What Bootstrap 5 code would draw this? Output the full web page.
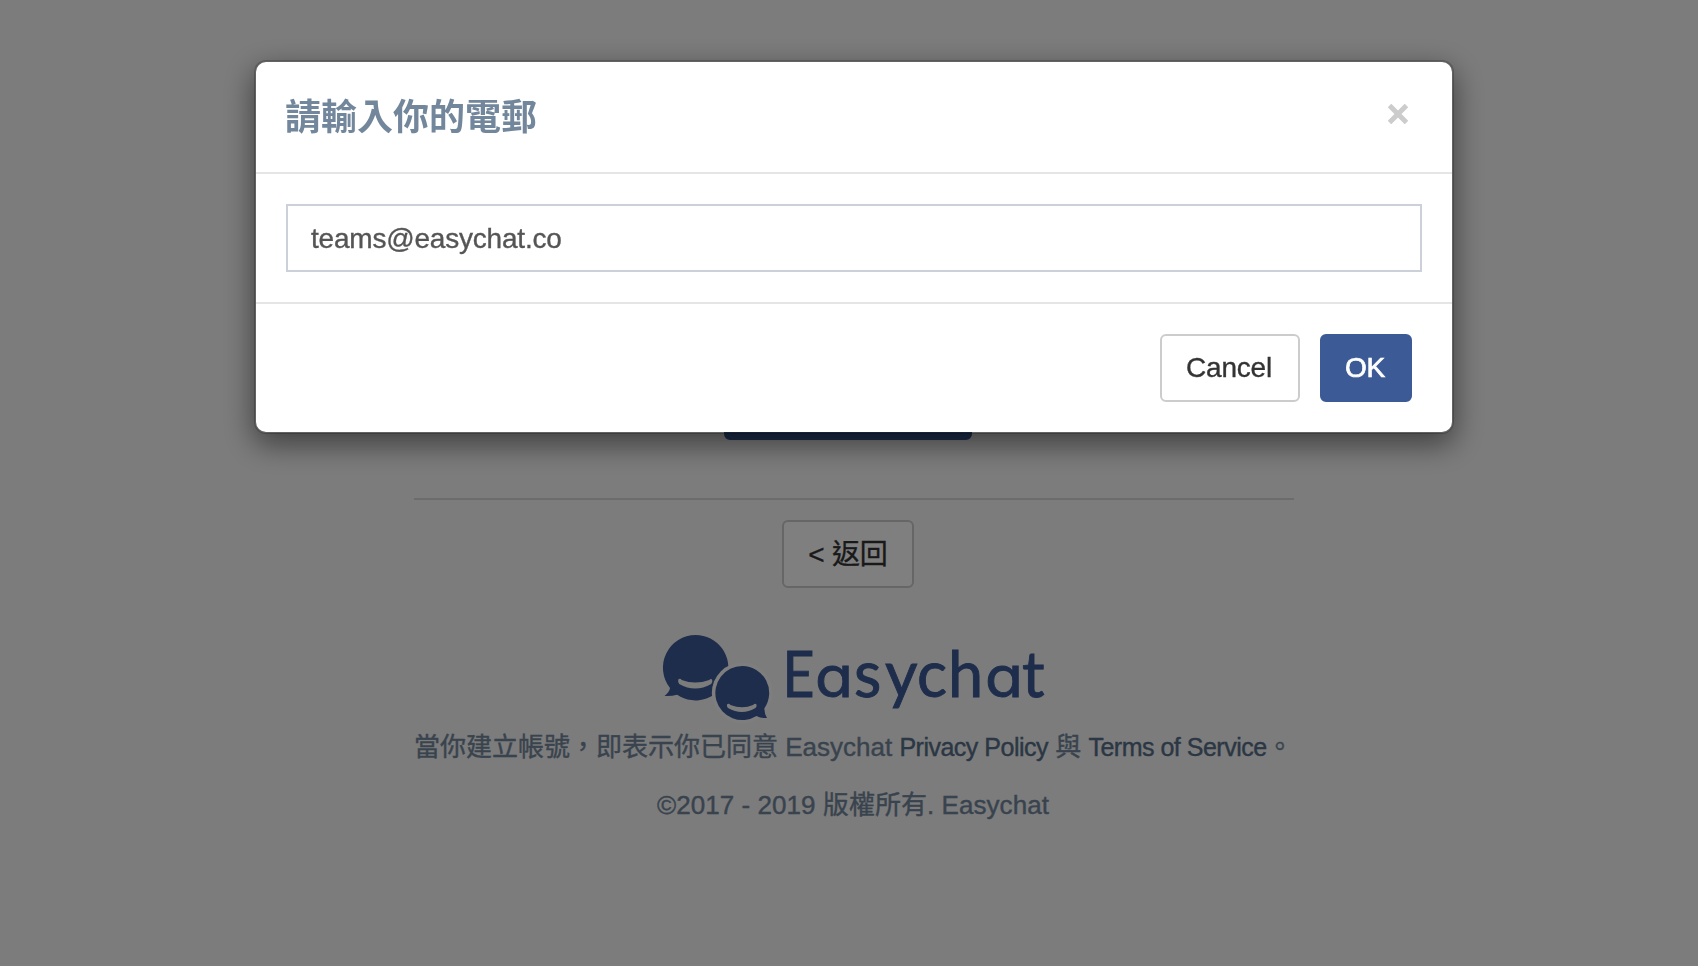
<!DOCTYPE html>
<html lang="zh-Hant">
<head>
<meta charset="utf-8">
<title>Easychat</title>
<link href="https://cdn.jsdelivr.net/npm/bootstrap@5.3.0/dist/css/bootstrap.min.css" rel="stylesheet">
<style>
body{background:#f8f8f8;font:26px/36px "Liberation Sans","Noto Sans CJK TC",sans-serif;color:#73879c;height:966px;overflow:hidden;-webkit-text-stroke:.4px}
.page-col{width:880px;margin-left:414px;padding-top:372px}
.btn{--bs-btn-font-size:28px;--bs-btn-line-height:40px;--bs-btn-padding-y:12px;--bs-btn-padding-x:20px;--bs-btn-border-width:2px;--bs-btn-border-radius:6px;height:68px;letter-spacing:-.2px;white-space:nowrap;-webkit-text-stroke:.35px}
.btn-plain{--bs-btn-color:#333;--bs-btn-bg:#fff;--bs-btn-border-color:#ccc}
.btn-brand{--bs-btn-color:#fff;--bs-btn-bg:#3c5a96;--bs-btn-border-color:#3c5a96}
.btn-login{width:248px;margin-left:310px}
.btn-back{width:132px;margin-left:368px;--bs-btn-padding-x:0px;padding-top:13px;padding-bottom:11px}
.btn-cancel{width:140px;padding-right:22px}
.btn-ok{width:92px;padding-right:22px;-webkit-text-stroke:.7px}
.rule{height:2px;background:#d8d8d8;margin:58px 0 20px}
.brand-logo{display:block;margin:40px 0 0 236px;-webkit-text-stroke:0;overflow:visible}
.wordmark{font-family:Lato,sans-serif;font-size:63px;fill:#3c5a96;stroke:#3c5a96;stroke-width:.9px}
.wordmark .round-a{font-family:Inter,sans-serif;font-size:56px;font-feature-settings:"cv11"}
.terms{position:relative;top:1px;text-shadow:0 2px 0 rgba(255,255,255,.1);white-space:nowrap}
.terms a{color:#566f88;font-size:25px;text-decoration:none;letter-spacing:-.5px}
.copyright{margin-top:22px;letter-spacing:.05px;padding-right:2px}
.modal-backdrop{--bs-backdrop-opacity:.5}
.modal-dialog{width:1200px;max-width:none;margin:60px 0 0 254px}
.modal-content{border:2px solid rgba(0,0,0,.2);border-radius:12px;box-shadow:0 10px 30px rgba(0,0,0,.5);height:374px}
.modal-header{height:112px;padding:31px 30px 29px 29px;border-bottom:2px solid #e5e5e5}
.modal-title{font-size:36px;line-height:50px;font-weight:700;color:#73879c;-webkit-text-stroke:0}
.modal-body{padding:30px;flex:none;height:128px}
.email-field{height:68px;border:2px solid #ccd1d9;border-radius:0;padding:13px 23px 11px;font-size:28px;line-height:40px;color:#555;letter-spacing:-.2px;-webkit-text-stroke:.35px}
.modal-footer{height:130px;padding:30px 40px 30px 30px;border-top:2px solid #e5e5e5;gap:20px}
.modal-footer>*{margin:0}
.close-x{width:20px;height:20px;margin:0 14px 9px 0}
</style>
</head>
<body>
<main class="page-col">
  <button class="btn btn-brand btn-login d-block" aria-label="Login"></button>
  <div class="rule"></div>
  <button class="btn btn-plain btn-back d-block">&lt; 返回</button>
  <svg class="brand-logo" width="410" height="100" viewBox="650 628 410 100">
    <g fill="#3c5a96" stroke="#fff" stroke-opacity=".06" stroke-width="8" paint-order="stroke">
      <path d="M695.7 635a32.7 32.7 0 1 1-18.5 59.7Q671 696.5 664.5 696Q669.500 692 670 688A32.700 32.700 0 0 1 695.700 635Z"/>
    </g>
    <circle cx="742.3" cy="693" r="30.500" fill="#fcfcfc"/>
    <path fill="#3c5a96" d="M742.300 666a27 27 0 0 1 22 42.500Q764.500 714 767 718Q761 718.500 756.500 716A27 27 0 1 1 742.300 666Z"/>
    <g fill="#f8f8f8">
      <path d="M678.200 679.500q2-1.500 3.500.5q13.500 5 27.500 0q2-2 3 0q.5 2-1 4q-16 9-32 0q-1.500-2-1-4.500Z"/>
      <path d="M727 704.500q1.500-1.500 3.500.5q12 4.500 22.500 0q2.500-2 3.500-.5q.5 2-1 3.500q-13.500 8-27.500 0q-1.500-1.500-1-3.500Z"/>
    </g>
    <text class="wordmark" y="697"><tspan x="782.5" textLength="32" lengthAdjust="spacingAndGlyphs">E</tspan><tspan class="round-a" x="815" textLength="38" lengthAdjust="spacingAndGlyphs">a</tspan><tspan x="854 885 917 948">sych</tspan><tspan class="round-a" x="985" textLength="38" lengthAdjust="spacingAndGlyphs">a</tspan><tspan x="1022">t</tspan></text>
  </svg>
  <div class="terms">當你建立帳號，即表示你已同意 Easychat <a href="#">Privacy Policy</a> 與 <a href="#">Terms of Service</a>。</div>
  <div class="terms copyright text-center">©2017 - 2019 版權所有. Easychat</div>
</main>
<div class="modal-backdrop show"></div>
<div class="modal d-block overflow-hidden" tabindex="-1">
  <div class="modal-dialog">
    <div class="modal-content">
      <div class="modal-header">
        <h4 class="modal-title">請輸入你的電郵</h4>
        <svg class="close-x" viewBox="0 0 20 20" role="button"><path d="M1.500 1.500L18.500 18.500M18.500 1.500L1.500 18.500" stroke="#ccc" stroke-width="5"/></svg>
      </div>
      <div class="modal-body"><input class="form-control email-field" type="text" value="teams@easychat.co"></div>
      <div class="modal-footer">
        <button class="btn btn-plain btn-cancel">Cancel</button>
        <button class="btn btn-brand btn-ok">OK</button>
      </div>
    </div>
  </div>
</div>
<script src="https://cdn.jsdelivr.net/npm/bootstrap@5.3.0/dist/js/bootstrap.bundle.min.js"></script>
</body>
</html>
